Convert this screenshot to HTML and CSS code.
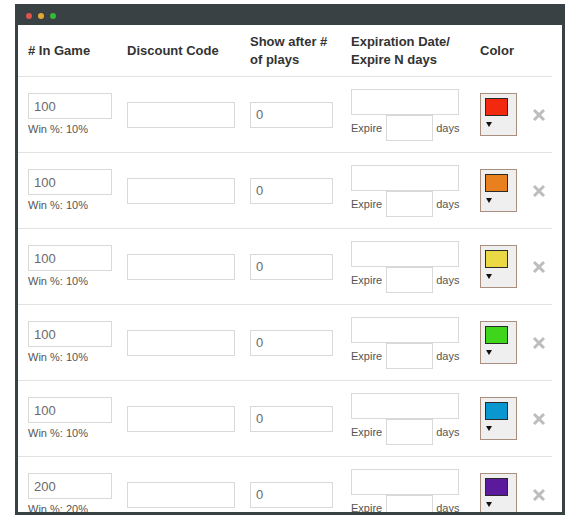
FILE: index.html
```html
<!DOCTYPE html>
<html>
<head>
<meta charset="utf-8">
<link rel="stylesheet" href="styles.css">
</head>
<body>
<div class="window">
  <div class="titlebar">
    <span class="dot dot-red"></span>
    <span class="dot dot-yellow"></span>
    <span class="dot dot-green"></span>
  </div>
  <div class="content">
    <table class="prizes">
      <colgroup>
        <col class="c-game"><col class="c-code"><col class="c-show"><col class="c-date"><col class="c-color"><col class="c-del">
      </colgroup>
      <thead>
        <tr>
          <th># In Game</th>
          <th>Discount Code</th>
          <th>Show after #<br>of plays</th>
          <th>Expiration Date/<br>Expire N days</th>
          <th>Color</th>
          <th></th>
        </tr>
      </thead>
      <tbody>
        <tr>
          <td><input class="field f-game" value="100"><div class="win">Win %: 10%</div></td>
          <td><input class="field f-code"></td>
          <td><input class="field f-show" value="0"></td>
          <td><input class="field f-date"><div class="expire"><span>Expire</span><input class="field f-days"><span>days</span></div></td>
          <td><div class="picker"><span class="swatch sw-red"></span><span class="arrow"></span></div></td>
          <td><svg class="remove" viewBox="0 0 14 14"><path d="M2 2L12 12M12 2L2 12"/></svg></td>
        </tr>
        <tr>
          <td><input class="field f-game" value="100"><div class="win">Win %: 10%</div></td>
          <td><input class="field f-code"></td>
          <td><input class="field f-show" value="0"></td>
          <td><input class="field f-date"><div class="expire"><span>Expire</span><input class="field f-days"><span>days</span></div></td>
          <td><div class="picker"><span class="swatch sw-orange"></span><span class="arrow"></span></div></td>
          <td><svg class="remove" viewBox="0 0 14 14"><path d="M2 2L12 12M12 2L2 12"/></svg></td>
        </tr>
        <tr>
          <td><input class="field f-game" value="100"><div class="win">Win %: 10%</div></td>
          <td><input class="field f-code"></td>
          <td><input class="field f-show" value="0"></td>
          <td><input class="field f-date"><div class="expire"><span>Expire</span><input class="field f-days"><span>days</span></div></td>
          <td><div class="picker"><span class="swatch sw-yellow"></span><span class="arrow"></span></div></td>
          <td><svg class="remove" viewBox="0 0 14 14"><path d="M2 2L12 12M12 2L2 12"/></svg></td>
        </tr>
        <tr>
          <td><input class="field f-game" value="100"><div class="win">Win %: 10%</div></td>
          <td><input class="field f-code"></td>
          <td><input class="field f-show" value="0"></td>
          <td><input class="field f-date"><div class="expire"><span>Expire</span><input class="field f-days"><span>days</span></div></td>
          <td><div class="picker"><span class="swatch sw-green"></span><span class="arrow"></span></div></td>
          <td><svg class="remove" viewBox="0 0 14 14"><path d="M2 2L12 12M12 2L2 12"/></svg></td>
        </tr>
        <tr>
          <td><input class="field f-game" value="100"><div class="win">Win %: 10%</div></td>
          <td><input class="field f-code"></td>
          <td><input class="field f-show" value="0"></td>
          <td><input class="field f-date"><div class="expire"><span>Expire</span><input class="field f-days"><span>days</span></div></td>
          <td><div class="picker"><span class="swatch sw-blue"></span><span class="arrow"></span></div></td>
          <td><svg class="remove" viewBox="0 0 14 14"><path d="M2 2L12 12M12 2L2 12"/></svg></td>
        </tr>
        <tr>
          <td><input class="field f-game" value="200"><div class="win">Win %: 20%</div></td>
          <td><input class="field f-code"></td>
          <td><input class="field f-show" value="0"></td>
          <td><input class="field f-date"><div class="expire"><span>Expire</span><input class="field f-days"><span>days</span></div></td>
          <td><div class="picker"><span class="swatch sw-purple"></span><span class="arrow"></span></div></td>
          <td><svg class="remove" viewBox="0 0 14 14"><path d="M2 2L12 12M12 2L2 12"/></svg></td>
        </tr>
      </tbody>
    </table>
  </div>
</div>
</body>
</html>
```

FILE: styles.css
```css
html, body {
  margin: 0;
  padding: 0;
  background: #ffffff;
}

body {
  font-family: "Liberation Sans", Arial, sans-serif;
  color: #333333;
}

.window {
  box-sizing: border-box;
  width: 550px;
  height: 511px;
  margin: 4px 0 0 15px;
  border: 3px solid #3a4144;
  border-top: 0;
  overflow: hidden;
  background: #ffffff;
  display: flex;
  flex-direction: column;
}

.titlebar {
  flex: 0 0 21px;
  background: #3a4144;
  display: flex;
  align-items: flex-start;
  gap: 6px;
  padding: 9px 0 0 8px;
  box-sizing: border-box;
}

.dot {
  width: 6px;
  height: 6px;
  border-radius: 50%;
}
.dot-red { background: #e2524b; }
.dot-yellow { background: #e3a936; }
.dot-green { background: #36b936; }

.content {
  flex: 1;
  padding-right: 10px;
  overflow: hidden;
}

.prizes {
  width: 534px;
  table-layout: fixed;
  border-collapse: collapse;
}

.c-game { width: 99px; }
.c-code { width: 123px; }
.c-show { width: 101px; }
.c-date { width: 129px; }
.c-color { width: 50px; }
.c-del { width: 32px; }

.prizes th {
  height: 51px;
  padding: 0 10px;
  text-align: left;
  vertical-align: middle;
  font-size: 13px;
  line-height: 18px;
  font-weight: bold;
  color: #333333;
  border-bottom: 1px solid #e2e2e2;
}

.prizes td {
  height: 75px;
  padding: 0 10px;
  vertical-align: middle;
  border-bottom: 1px solid #e2e2e2;
}

.field {
  display: block;
  box-sizing: border-box;
  height: 26px;
  margin: 0;
  padding: 0 5px;
  border: 1px solid #d9d9d9;
  border-radius: 0;
  background: #ffffff;
  font-family: "Liberation Sans", Arial, sans-serif;
  font-size: 13px;
  color: #6a6a6a;
  outline: none;
}

.f-game { width: 84px; }
.f-code { width: 108px; }
.f-show { width: 83px; }
.f-date { width: 108px; }
.f-days { width: 47px; }

.win {
  margin-top: 3px;
  font-size: 11px;
  line-height: 14px;
  color: #555555;
}

.expire {
  display: flex;
  align-items: center;
  font-size: 11px;
  color: #555555;
}
.expire .f-days {
  margin: 0 3px 0 4px;
}

.picker {
  box-sizing: border-box;
  width: 37px;
  height: 43px;
  border: 1px solid #a88f7f;
  background: #efefef;
  padding: 4px 0 0 4px;
}

.swatch {
  display: block;
  box-sizing: border-box;
  width: 23px;
  height: 18px;
  border: 1px solid #2a2a2a;
}
.sw-red { background: #f2290f; }
.sw-orange { background: #e8801f; }
.sw-yellow { background: #ebd845; }
.sw-green { background: #3fd51a; }
.sw-blue { background: #0a97d0; }
.sw-purple { background: #5a1a9b; }

.arrow {
  display: block;
  width: 0;
  height: 0;
  margin: 6px 0 0 1px;
  border-left: 3px solid transparent;
  border-right: 3px solid transparent;
  border-top: 5px solid #111111;
}

.remove {
  display: block;
  width: 14px;
  height: 14px;
  margin-left: 2px;
  fill: none;
  stroke: #bdbdbd;
  stroke-width: 3;
}
```
